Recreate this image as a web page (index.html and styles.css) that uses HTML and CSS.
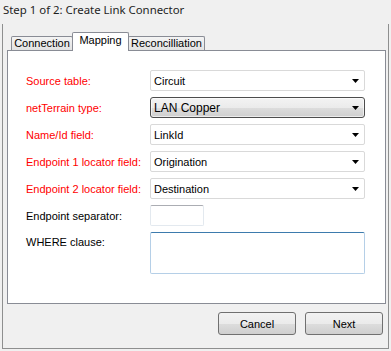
FILE: index.html
```html
<!DOCTYPE html>
<html lang="en">
<head>
    <meta charset="UTF-8">
    <title>Create Link Connector</title>
    <link rel="stylesheet" href="styles.css">
</head>
<body>
    <div class="title">Step 1 of 2: Create Link Connector</div>

    <div class="frame">
        <div class="tabs">
            <div class="tab tab-connection">Connection</div>
            <div class="tab tab-mapping active">Mapping</div>
            <div class="tab tab-recon">Reconcilliation</div>
        </div>

        <div class="panel">
            <div class="form">
                <label class="lbl req">Source table:</label>
                <div class="combo"><span>Circuit</span><svg class="arrow" width="7" height="4"><polygon points="0,0 7,0 3.5,4" /></svg></div>

                <label class="lbl req">netTerrain type:</label>
                <div class="combo focused"><span>LAN Copper</span><svg class="arrow" width="7" height="4"><polygon points="0,0 7,0 3.5,4" /></svg></div>

                <label class="lbl req">Name/Id field:</label>
                <div class="combo"><span>LinkId</span><svg class="arrow" width="7" height="4"><polygon points="0,0 7,0 3.5,4" /></svg></div>

                <label class="lbl req">Endpoint 1 locator field:</label>
                <div class="combo"><span>Origination</span><svg class="arrow" width="7" height="4"><polygon points="0,0 7,0 3.5,4" /></svg></div>

                <label class="lbl req">Endpoint 2 locator field:</label>
                <div class="combo"><span>Destination</span><svg class="arrow" width="7" height="4"><polygon points="0,0 7,0 3.5,4" /></svg></div>

                <label class="lbl">Endpoint separator:</label>
                <div class="textbox small"></div>

                <label class="lbl top">WHERE clause:</label>
                <div class="textbox where"></div>
            </div>
        </div>

        <div class="buttons">
            <button class="btn">Cancel</button>
            <button class="btn">Next</button>
        </div>
    </div>
</body>
</html>
```

FILE: styles.css
```css
body {
    margin: 0;
    background-color: #f0f0f0;
    font-family: "Liberation Sans", Arial, sans-serif;
    font-size: 11px;
    color: #000;
}

.title {
    height: 24px;
    line-height: 20px;
    padding-left: 3px;
    font-family: "Noto Sans", sans-serif;
    font-size: 11.4px;
    color: #1e1e1e;
}

.frame {
    margin: 0 2px;
    padding: 8px 2px 13px 4px;
    border: 1px solid #8e8f8f;
    border-top: none;
}

.tabs {
    display: flex;
    align-items: flex-end;
    padding-left: 4px;
}

.tab {
    box-sizing: border-box;
    height: 14px;
    line-height: 13px;
    border: 1px solid #898c95;
    border-bottom: none;
    background: linear-gradient(#f4f4f4, #e2e2e2);
    text-align: center;
    border-radius: 2px 2px 0 0;
}

.tab + .tab {
    margin-left: -1px;
}

.tab-connection {
    width: 62px;
}

.tab-mapping {
    width: 57px;
}

.tab-recon {
    width: 77px;
}

.tab.active {
    height: 19px;
    line-height: 15px;
    margin-bottom: -1px;
    background: #fff;
    position: relative;
    z-index: 1;
}

.panel {
    box-sizing: border-box;
    height: 254px;
    border: 1px solid #898c95;
    background-color: #fff;
    padding: 19px 20px 0 18px;
}

.form {
    display: grid;
    grid-template-columns: 124px 215px;
    row-gap: 6px;
    align-items: center;
}

.lbl {
    white-space: nowrap;
}

.lbl.req {
    color: #ff0000;
}

.lbl.top {
    align-self: start;
    padding-top: 4px;
}

.combo {
    box-sizing: border-box;
    height: 21px;
    display: flex;
    align-items: center;
    justify-content: space-between;
    padding: 0 5px 0 3px;
    border: 1px solid #d9d9d9;
    border-radius: 2px;
    background-color: #fff;
}

.combo.focused {
    border-color: #4d4d4d;
    border-radius: 3px;
    background: linear-gradient(#f3f3f3 0%, #ebebeb 50%, #dddddd 51%, #cfcfcf 100%);
    box-shadow: inset 0 0 0 1px rgba(255, 255, 255, 0.6);
    font-size: 12px;
}

.arrow polygon {
    fill: #000;
}

.textbox {
    box-sizing: border-box;
    height: 21px;
    border: 1px solid #e3e9ef;
    border-top-color: #abadb3;
    border-radius: 2px;
    background-color: #fff;
}

.textbox.small {
    width: 54px;
}

.textbox.where {
    height: 42px;
    border-color: #b5cfe7;
    border-top-color: #3d7bad;
}

.buttons {
    display: flex;
    justify-content: flex-end;
    gap: 9px;
    margin-top: 8px;
    padding-right: 3px;
}

.btn {
    box-sizing: border-box;
    width: 78px;
    height: 23px;
    padding: 0;
    border: 1px solid #707070;
    border-radius: 3px;
    background: linear-gradient(#f2f2f2 0%, #ebebeb 50%, #dddddd 51%, #cfcfcf 100%);
    font-family: "Liberation Sans", Arial, sans-serif;
    font-size: 11px;
    color: #000;
}
```
